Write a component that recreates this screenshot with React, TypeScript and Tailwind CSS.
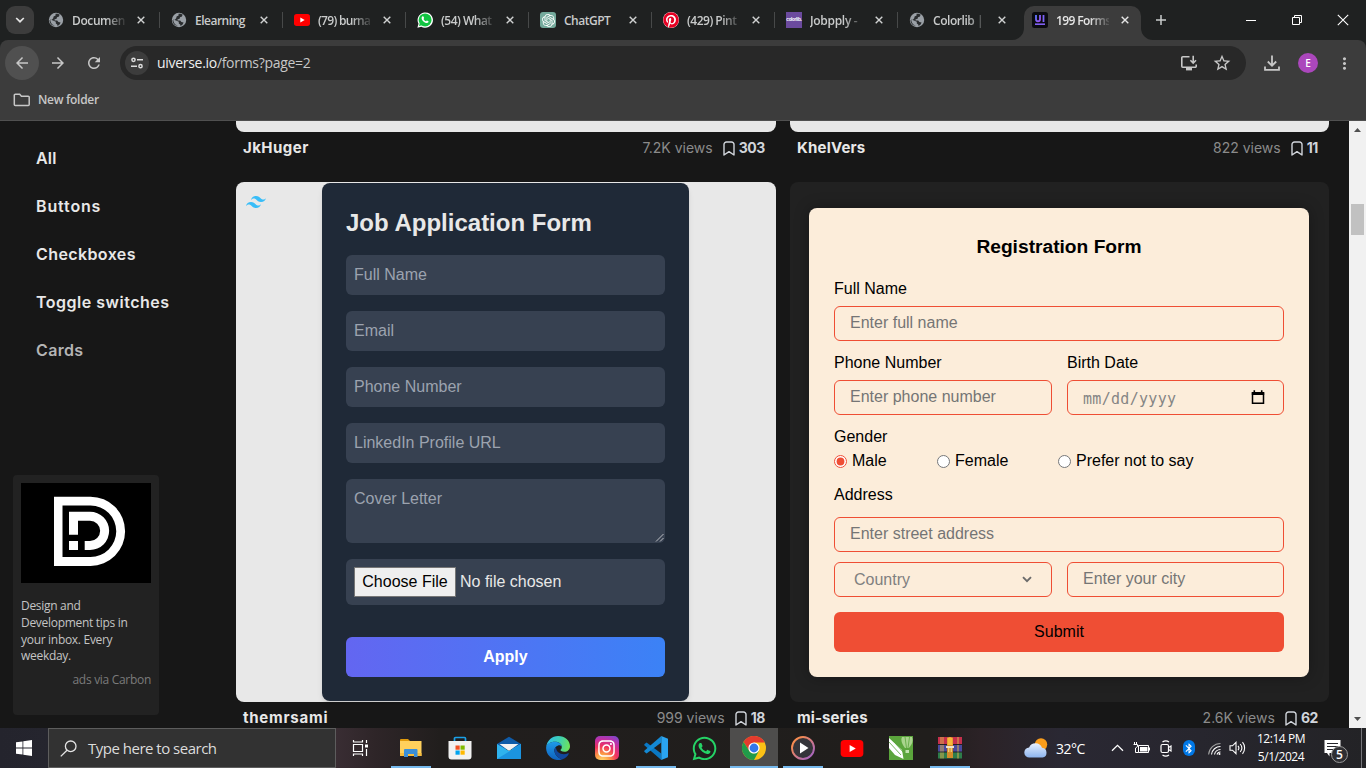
import React from "react";
import { FaPinterest, FaWhatsapp, FaInstagram } from "react-icons/fa";
import { SiOpenai, SiTailwindcss } from "react-icons/si";
import { MdArrowBack, MdArrowForward, MdRefresh, MdMoreVert, MdStarBorder, MdBluetooth } from "react-icons/md";

const segoe = "font-['Open_Sans','Noto_Sans',sans-serif]";
const arial = "font-['Liberation_Sans',Arial,sans-serif]";

/* ---------- favicons ---------- */

const Globe = () => (
  <svg width="16" height="16" viewBox="0 0 16 16">
    <circle cx="8" cy="8" r="7.2" fill="#9aa0a6" />
    <path d="M7.5 1.8C9.5 1.5 10.6 2 11.6 2.6L11 4.6 9 5.2 8.6 6.8 6.4 7.4 6.6 8.6H9.2L10.4 10 12.6 10.4 11.6 12.6 9.6 14 9.2 12.4 7.8 11.4V9.8L5 8.6 2.2 7.6C2.4 9 2.8 11 4.4 12.4L6.8 13.8C3.4 13.6 1.4 11 1.6 8 3 8.2 4.2 7.8 5.2 6.2L5.6 4.6 7.6 3.6Z" fill="#2a2d2f" />
  </svg>
);

const YouTube = ({ w = 16, h = 12 }: { w?: number; h?: number }) => (
  <svg width={w} height={h} viewBox="0 0 24 18">
    <rect width="24" height="18" rx="4" fill="#ff0000" />
    <path d="M9.500 5.200v7.600L16 9z" fill="#fff" />
  </svg>
);

const WhatsTab = () => (
  <svg width="16" height="16" viewBox="0 0 16 16">
    <path d="M.4 15.7l1.1-3.9A7.7 7.7 0 1 1 4.3 14.700z" fill="#fff" />
    <circle cx="8.1" cy="7.9" r="6.5" fill="#11c441" />
    <path d="M2 14l.8-3 2.200 2.200z" fill="#11c441" />
    <path d="M5.600 4.300c.5-.2.8 0 1 .5l.5 1.200c0 .4-.4.7-.6 1 .6 1.200 1.400 1.800 2.500 2.300.4-.2.600-.900 1-.9l1.500.8c.2.800-.5 1.700-1.500 1.800-2.800 0-5.500-2.700-5.400-5 0-.8.5-1.500 1-1.700z" fill="#fff" />
  </svg>
);

const GptTab = () => (
  <span className="flex size-4 items-center justify-center rounded-[3px] bg-[#74aa9c]">
    <SiOpenai size={13} color="#fff" />
  </span>
);

const PinTab = () => (
  <span className="flex size-4 items-center justify-center rounded-full bg-white">
    <FaPinterest size={16} color="#e60023" />
  </span>
);

const ColorlibTab = () => (
  <span className="flex size-4 items-center justify-center bg-[#6b4a9e]">
    <span className="font-['Inter',sans-serif] text-[4.500px] leading-none font-bold tracking-[-0.3px] text-white">colorlib.</span>
  </span>
);

const UiTab = () => (
  <svg width="16" height="16" viewBox="0 0 16 16">
    <defs>
      <linearGradient id="ui" x1="0" y1="0" x2="1" y2="1">
        <stop offset="0" stopColor="#5a7bff" />
        <stop offset="1" stopColor="#a24bf0" />
      </linearGradient>
    </defs>
    <rect width="16" height="16" rx="2.500" fill="#0b0b10" />
    <path d="M4 3v4.300a2 2 0 0 0 4 0V3" stroke="url(#ui)" strokeWidth="1.800" fill="none" />
    <path d="M11.500 3v7" stroke="#7a63f5" strokeWidth="1.800" />
    <path d="M3 12.200h10" stroke="#8060f3" strokeWidth="1.600" />
  </svg>
);

const CloseX = ({ color = "#d0d2d2" }: { color?: string }) => (
  <svg width="8" height="8" viewBox="0 0 8 8">
    <path d="M.7.7l6.600 6.600M7.300.7L.7 7.300" stroke={color} strokeWidth="1.400" />
  </svg>
);

const tabs: { icon: React.ReactNode; title: string; track: string }[] = [
  { icon: <Globe />, title: "Documen", track: "tracking-[-0.4px]" },
  { icon: <Globe />, title: "Elearning", track: "tracking-[-0.5px]" },
  { icon: <YouTube />, title: "(79) burna", track: "tracking-[-0.7px]" },
  { icon: <WhatsTab />, title: "(54) What", track: "tracking-[-0.5px]" },
  { icon: <GptTab />, title: "ChatGPT", track: "tracking-[-0.5px]" },
  { icon: <PinTab />, title: "(429) Pint", track: "tracking-[-0.5px]" },
  { icon: <ColorlibTab />, title: "Jobpply -", track: "tracking-[-0.3px]" },
  { icon: <Globe />, title: "Colorlib |", track: "tracking-[-0.45px]" },
];

const fade = "[mask-image:linear-gradient(to_right,#000_64%,rgba(0,0,0,0.12)_100%)]";

function TabStrip() {
  return (
    <div className={`flex h-10 bg-[#1f2121] ${segoe}`}>
      <div className="mt-1.5 ml-1.5 flex size-7 items-center justify-center rounded-[9px] bg-[#3c3c3c]">
        <svg width="10" height="6" viewBox="0 0 10 6"><path d="M1.200 1L5 4.700 8.800 1" stroke="#e3e3e3" strokeWidth="1.700" fill="none" /></svg>
      </div>
      <div className="ml-1 flex">
        {tabs.map((t, i) => (
          <div key={i} className="flex h-10 w-[123px] items-center pl-2.5">
            <span className="flex size-4 shrink-0 items-center justify-center">{t.icon}</span>
            <span className={`ml-2 w-[53px] whitespace-nowrap pt-px text-[12px] font-semibold text-[#c9cbcb] ${t.track} ${["Elearning", "ChatGPT"].includes(t.title) ? "" : fade}`}>{t.title}</span>
            <span className="ml-3"><CloseX /></span>
            <span className={`mr-px ml-auto h-4 w-[1.500px] ${i < 7 ? "bg-[#474949]" : ""}`} />
          </div>
        ))}
      </div>
      <div className="-ml-2.5 flex items-end">
        <svg width="12" height="12" viewBox="0 0 12 12"><path d="M12 0v12H0A12 12 0 0 0 12 0z" fill="#3c3c3c" /></svg>
        <div className="flex h-[34px] w-[117px] items-center rounded-t-[10px] bg-[#3c3c3c] pb-1.5 pl-2">
          <UiTab />
          <span className={`ml-2 w-[53px] whitespace-nowrap pt-px text-[12px] font-semibold tracking-[-0.6px] text-[#e6e6e6] ${fade}`}>199 Forms</span>
          <span className="ml-3"><CloseX color="#e6e6e6" /></span>
        </div>
        <svg width="12" height="12" viewBox="0 0 12 12"><path d="M0 0v12h12A12 12 0 0 1 0 0z" fill="#3c3c3c" /></svg>
      </div>
      <div className="ml-0.5 flex h-10 items-center">
        <svg width="12" height="12" viewBox="0 0 12 12"><path d="M6 1v10M1 6h10" stroke="#c9cbcb" strokeWidth="1.500" /></svg>
      </div>
      <div className="ml-auto flex h-10 items-center">
        <svg width="12" height="12" viewBox="0 0 12 12" className="mr-[34px]"><path d="M1 6.500h10" stroke="#fff" /></svg>
        <svg width="12" height="12" viewBox="0 0 12 12" className="mr-[34px]"><path d="M1.500 3.500h7v7h-7zM3.500 3.500v-2h7v7h-2" stroke="#fff" fill="none" /></svg>
        <svg width="12" height="12" viewBox="0 0 12 12" className="mr-[17px]"><path d="M.8.8l10.400 10.400M11.200.8L.8 11.200" stroke="#fff" strokeWidth="1.100" /></svg>
      </div>
    </div>
  );
}

function Toolbar() {
  return (
    <div className="bg-[#1f2121]">
      <div className={`flex h-[81px] flex-col rounded-t-lg border-b border-[#505050] bg-[#3c3c3c] ${segoe}`}>
        <div className="flex h-[46px] items-center text-[#c7c7c7]">
          <span className="ml-[5px] flex size-[34px] items-center justify-center rounded-full bg-[#505050]"><MdArrowBack size={18} /></span>
          <MdArrowForward size={18} className="ml-2.5" />
          <MdRefresh size={18} className="ml-[18px]" />
          <div className="ml-[17px] flex h-[34px] w-[1126px] items-center rounded-full bg-[#282828]">
            <span className="ml-[5px] flex size-6 items-center justify-center rounded-full bg-[#3c3c3c]">
              <svg width="14" height="12" viewBox="0 0 14 12" fill="none" stroke="#dcdcdc" strokeWidth="1.500">
                <circle cx="3.500" cy="2.800" r="1.600" /><path d="M7 2.800h6M1 9.200h6" /><circle cx="10.500" cy="9.200" r="1.600" />
              </svg>
            </span>
            <span className="ml-2 pb-px text-[14px] tracking-[-0.3px] whitespace-nowrap text-[#c7c7c7]"><span className="text-[#efefef]">uiverse.io</span>/forms?page=2</span>
            <svg width="18" height="16" viewBox="0 0 18 16" className="mr-[14px] ml-auto" fill="none" stroke="#c7c7c7" strokeWidth="1.600">
              <path d="M9.500 1.800H2.800a1 1 0 0 0-1 1v8.400a1 1 0 0 0 1 1h12.400a1 1 0 0 0 1-1V9.500" /><path d="M13.200.8v7M10.400 5.200l2.800 2.800L16 5.200" /><path d="M6 14.200h6" strokeWidth="2.400" />
            </svg>
            <MdStarBorder size={20} className="mr-3.5" />
          </div>
          <svg width="16" height="16" viewBox="0 0 16 16" className="ml-[18px]" fill="none" stroke="#c7c7c7" strokeWidth="1.800">
            <path d="M8 .5v10M3.800 6.500L8 10.700l4.200-4.200M1 11.500v3.300h14v-3.300" />
          </svg>
          <span className="ml-[18px] flex size-5 items-center justify-center rounded-full bg-[#ab47bc] text-[10px] font-semibold text-white">E</span>
          <MdMoreVert size={19} className="ml-[17px]" />
        </div>
        <div className="flex h-[28px] items-center pl-[13px]">
          <svg width="17" height="14" viewBox="0 0 17 14" fill="none" stroke="#c7c7c7" strokeWidth="1.500"><path d="M2.300 1.300h4.400l1.700 1.900h6.800a1 1 0 0 1 1 1v7.300a1 1 0 0 1-1 1H2.300a1 1 0 0 1-1-1V2.300a1 1 0 0 1 1-1z" /></svg>
          <span className="ml-2 text-[12px] font-semibold tracking-[-0.3px] text-[#c7c7c7]">New folder</span>
        </div>
      </div>
    </div>
  );
}

/* ---------- page ---------- */

const mont = "font-['Inter',sans-serif]";

function Sidebar() {
  const items: [string, string][] = [
    ["All", "text-[#e8e8e8] tracking-[0.2px]"],
    ["Buttons", "text-[#e8e8e8] tracking-[0.85px]"],
    ["Checkboxes", "text-[#e8e8e8] tracking-[0.4px]"],
    ["Toggle switches", "text-[#e8e8e8] tracking-[0.5px]"],
    ["Cards", "text-[#b4b4b4] tracking-[0.35px]"],
  ];
  return (
    <aside className="flex w-[236px] shrink-0 flex-col">
      <nav className={`flex flex-col pt-[13px] pl-9 ${mont}`}>
        {items.map(([name, style]) => (
          <a key={name} className={`flex h-12 items-center text-[16px] font-semibold ${style}`}>{name}</a>
        ))}
      </nav>
      <div className={`mt-[101px] ml-[13px] h-[240px] w-[146px] rounded bg-[#222] p-2 text-[12px] ${segoe}`}>
        <svg width="130" height="100" viewBox="0 0 130 100" className="block bg-black" fill="#fff">
          <path fillRule="evenodd" d="M33 13.700H69.500a34.600 34.600 0 0 1 0 69.200H33zM41.500 22.500V74H69.500a25.750 25.750 0 0 0 0-51.500z" />
          <path d="M48 28.700H69a19.150 19.150 0 0 1 0 38.300H63.700V58H69a10.150 10.150 0 0 0 0-20.300H57V51.700H48zM48 58h9v9h-9z" />
        </svg>
        <p className="mt-[15px] leading-[16.800px] tracking-[-0.3px] whitespace-nowrap text-[#c4c4c4]">Design and<br />Development tips in<br />your inbox. Every<br />weekday.</p>
        <p className="mt-[6px] text-right leading-[17px] tracking-[-0.3px] text-[#7b7b7b]">ads via Carbon</p>
      </div>
    </aside>
  );
}

function Meta({ name, views, saves, track }: { name: string; views: string; saves: string; track: string }) {
  return (
    <div className={`flex h-8 items-center pr-[11px] pl-[7px] ${mont}`}>
      <span className={`text-[15px] font-bold text-[#e8e8e8] ${track}`}>{name}</span>
      <span className="ml-auto pb-px text-[14px] text-[#8b8b8b]">{views}</span>
      <svg width="12" height="15" viewBox="0 0 12 15" className="ml-2.5" fill="none" stroke="#d1d5db" strokeWidth="1.400">
        <path d="M1 14V3.500A2.500 2.500 0 0 1 3.500 1h5A2.500 2.500 0 0 1 11 3.500V14L6 10.600z" strokeLinejoin="round" />
      </svg>
      <span className="ml-1 pb-px text-[14px] font-bold tracking-[-0.4px] text-[#d1d5db]">{saves}</span>
    </div>
  );
}

function JobForm() {
  return (
    <div className="relative flex h-[520px] rounded-lg bg-[#e8e8e8] py-px pl-[86px]">
      <SiTailwindcss size={20} color="#38bdf8" className="absolute top-2.5 left-2.5" />
      <div className={`w-[367px] rounded-lg bg-[#1f2937] p-6 text-[16px] shadow-md ${arial}`}>
        <h2 className="mb-4 text-2xl leading-8 font-bold text-[#e8e8e8]">Job Application Form</h2>
        {["Full Name", "Email", "Phone Number", "LinkedIn Profile URL"].map((p) => (
          <div key={p} className="mb-4 flex h-10 items-center rounded-md bg-[#374151] px-2 text-[#9ca3af]">{p}</div>
        ))}
        <div className="relative mb-4 h-16 rounded-md bg-[#374151] px-2 pt-2 text-[#9ca3af]">
          Cover Letter
          <svg width="9" height="9" viewBox="0 0 9 9" className="absolute right-px bottom-px"><path d="M1 8.500L8.500 1M5 8.500L8.500 5" stroke="#c9cbd0" strokeWidth=".9" /></svg>
        </div>
        <div className="mb-8 flex h-[46px] items-center rounded-md bg-[#374151] px-2 text-[#e8e8e8]">
          <span className="flex h-[30px] w-[102px] items-center justify-center border border-[#767676] bg-[#efefef] text-black">Choose File</span>
          <span className="ml-1">No file chosen</span>
        </div>
        <div className="flex h-10 items-center justify-center rounded-md bg-[linear-gradient(to_right,#6366f1,#3b82f6)] font-bold text-white">Apply</div>
      </div>
    </div>
  );
}

const box = "flex h-[35px] items-center rounded-md border border-[#ef4e34] px-[15px] pb-0.5 text-[#757575]";

function RegistrationForm() {
  return (
    <div className="flex h-[520px] rounded-lg bg-[#212121] pt-[26px] pl-[19px]">
      <div className={`h-[469px] w-[500px] rounded-lg bg-[#fcedda] p-[25px] text-[16px] leading-[18px] text-black shadow-[0_0_15px_rgba(0,0,0,0.3)] ${arial}`}>
        <h2 className="text-center text-[19.200px] leading-[28px] font-bold">Registration Form</h2>
        <p className="mt-[19px]">Full Name</p>
        <div className={`mt-2 ${box}`}>Enter full name</div>
        <div className="mt-[13px] grid grid-cols-[218px_217px] gap-x-[15px]">
          <p>Phone Number</p>
          <p>Birth Date</p>
          <div className={`mt-2 ${box}`}>Enter phone number</div>
          <div className="mt-2 flex h-[35px] items-center rounded-md border border-[#ef4e34] pr-[18px] pl-[15px] text-[#858585]">
            <span className="pt-0.5 font-['DejaVu_Sans_Mono',monospace] text-[15px] tracking-[0.3px]">mm/dd/yyyy</span>
            <svg width="14" height="15" viewBox="0 0 14 15" className="ml-auto"><path d="M1.500 3h11v10.300h-11z" fill="none" stroke="#000" strokeWidth="1.500" /><path d="M.8 2h12.400v3H.8zM2.500.3h1.600V3H2.500zM9.900.3h1.600V3H9.900z" /></svg>
          </div>
        </div>
        <p className="mt-[13px]">Gender</p>
        <div className="mt-1.5 flex h-[18px] items-center">
          <input type="radio" name="gender" defaultChecked className="m-0 size-[13px] accent-[#ef4e34]" /><span className="ml-[5px] w-[85px]">Male</span>
          <input type="radio" name="gender" className="m-0 size-[13px] accent-[#ef4e34]" /><span className="ml-[5px] w-[103px]">Female</span>
          <input type="radio" name="gender" className="m-0 size-[13px] accent-[#ef4e34]" /><span className="ml-[5px]">Prefer not to say</span>
        </div>
        <p className="mt-4">Address</p>
        <div className={`mt-[13px] ${box}`}>Enter street address</div>
        <div className="mt-2.5 grid grid-cols-[218px_217px] gap-x-[15px]">
          <div className="flex h-[35px] items-center rounded-md border border-[#ef4e34] pr-[19px] pl-[19px] text-[#808080]">
            Country
            <svg width="10" height="7" viewBox="0 0 10 7" className="ml-auto"><path d="M1 1.200l4 4 4-4" fill="none" stroke="#6b6b6b" strokeWidth="1.900" /></svg>
          </div>
          <div className={box}>Enter your city</div>
        </div>
        <div className="mt-[15px] flex h-10 items-center justify-center rounded-md bg-[#ef4e34]">Submit</div>
      </div>
    </div>
  );
}

function Page() {
  return (
    <div className="flex h-[607px] overflow-hidden bg-[#171717]">
      <Sidebar />
      <main className="grid w-[1093px] shrink-0 grid-cols-[540px_539px] content-start gap-x-3.5">
        <div className="h-[11px] rounded-b-lg bg-[#e8e8e8]" />
        <div className="h-[11px] rounded-b-lg bg-[#e8e8e8]" />
        <div className="mb-[18px]"><Meta name="JkHuger" views="7.2K views" saves="303" track="tracking-[0.45px]" /></div>
        <div className="mb-[18px]"><Meta name="KhelVers" views="822 views" saves="11" track="tracking-[0.2px]" /></div>
        <JobForm />
        <RegistrationForm />
        <Meta name="themrsami" views="999 views" saves="18" track="tracking-[0.75px]" />
        <Meta name="mi-series" views="2.6K views" saves="62" track="tracking-[0.1px]" />
      </main>
      <div className="ml-auto flex w-[17px] flex-col items-center bg-[#f1f1f1]">
        <svg width="7" height="4" viewBox="0 0 7 4" className="mt-[7px]"><path d="M0 4l3.500-4L7 4z" fill="#505050" /></svg>
        <div className="mt-[72px] h-[31px] w-[13px] bg-[#c1c1c1]" />
        <svg width="7" height="4" viewBox="0 0 7 4" className="mt-auto mb-[7px]"><path d="M0 0l3.500 4L7 0z" fill="#505050" /></svg>
      </div>
    </div>
  );
}

/* ---------- taskbar ---------- */

const Explorer = () => (
  <svg width="24" height="24" viewBox="0 0 24 24">
    <path d="M1 4a1 1 0 0 1 1-1h7l2 2v4H1z" fill="#e09a0c" /><path d="M1 5h21.500v15H1z" fill="#ffd05c" /><path d="M1 17h21.500v3H1z" fill="#f6bd3c" />
    <path d="M5 21v-7a1 1 0 0 1 1-1h11.500a1 1 0 0 1 1 1v7h-3.500v-3h-6v3z" fill="#3a8fd8" />
  </svg>
);
const Store = () => (
  <svg width="24" height="24" viewBox="0 0 24 24">
    <path d="M6.500 6V2.500A1 1 0 0 1 7.500 1.500h9a1 1 0 0 1 1 1V6" fill="none" stroke="#1ba1e8" strokeWidth="1.700" />
    <path d="M.5 5h23v15.500a3 3 0 0 1-3 3h-17a3 3 0 0 1-3-3z" fill="#f1f1f1" />
    <path d="M7.500 9.500h4.200v4.200H7.500z" fill="#f25022" /><path d="M12.500 9.500h4.200v4.200h-4.200z" fill="#7fba00" /><path d="M7.500 14.500h4.200v4.200H7.500z" fill="#00a4ef" /><path d="M12.500 14.500h4.200v4.200h-4.200z" fill="#ffb900" />
  </svg>
);
const Mail = () => (
  <svg width="24" height="24" viewBox="0 0 24 24">
    <path d="M0 8L12 .8 24 8v5H0z" fill="#0f5ba8" /><path d="M2.500 8h19L12 15z" fill="#f2f2f2" /><path d="M0 8l12 7 12-7v15H0z" fill="#2fb3ee" /><path d="M0 23L24 8v15z" fill="#1b94e0" />
  </svg>
);
const Edge = () => (
  <svg width="24" height="24" viewBox="0 0 24 24">
    <defs>
      <linearGradient id="eg" x1="0" y1=".3" x2="1" y2=".5"><stop offset="0" stopColor="#2fc0ee" /><stop offset=".55" stopColor="#3fd0b0" /><stop offset="1" stopColor="#6ee25a" /></linearGradient>
      <linearGradient id="eb" x1="0" y1="0" x2="0" y2="1"><stop offset="0" stopColor="#1e9be8" /><stop offset="1" stopColor="#0f60bd" /></linearGradient>
    </defs>
    <path d="M.2 11C1 4.500 6 0 12.200 0 19 0 24 4.800 24 10.200c0 3.400-2.600 5.600-5.500 5.600-3 0-4.200-1-4-1.700.3-.8 1.300-1.400 1.300-3.200C15.800 8 12.800 5.800 9 5.800 4 5.800 1 8.500.2 11z" fill="url(#eg)" />
    <path d="M.1 12C.2 8 4 5.800 9 5.800c3.800 0 6.600 2.200 6.800 4.800-1-1-2.400-1.500-3.600-1.200C9.500 10 8 12.500 8.500 15.500c.6 3.700 3.700 6.400 7.500 8C8 26 .2 20 .1 12z" fill="url(#eb)" />
    <path d="M10 11c-1 1.200-1.700 2.700-1.500 4.500.6 3.700 3.700 6.400 7.500 8 3.400-1.100 5.500-3.300 6.700-5.600.3-.5-.2-.8-.6-.6-5.800 2.700-12.300-.7-12.100-6.300z" fill="#11489c" />
  </svg>
);
const Insta = () => (
  <span className="flex size-6 items-center justify-center rounded-[5px] bg-[radial-gradient(circle_at_30%_105%,#ffdd70_0%,#fb9a45_25%,#f0315f_50%,#c32fa3_72%,#6a4fd8_100%)]">
    <FaInstagram size={19} color="#fff" />
  </span>
);
const Code = () => (
  <svg width="24" height="24" viewBox="0 0 24 24">
    <path d="M2.600 6.500L.3 8.200v1L17.300 24v-6.500z" fill="#0a78c4" /><path d="M17.300 0v6.500L2.600 17.500.3 15.800v-1z" fill="#1489d4" /><path d="M17.300 0L24 2.800v18.400L17.300 24z" fill="#2aa4f0" />
  </svg>
);
const Chrome = () => (
  <svg width="24" height="24" viewBox="0 0 24 24">
    <circle cx="12" cy="12" r="12" fill="#fbc116" />
    <path d="M12 6.500H22.700A12 12 0 0 0 1.600 6L7.200 14.700z" fill="#e33b2e" />
    <path d="M1.600 6A12 12 0 0 0 12 24l5-9.200-5 2.700c-2.200 0-4-1.200-4.800-2.800z" fill="#219a4a" />
    <circle cx="12" cy="12" r="5.600" fill="#fff" /><circle cx="12" cy="12" r="4.400" fill="#3277ea" />
  </svg>
);
const Player = () => (
  <svg width="24" height="24" viewBox="0 0 24 24">
    <defs><linearGradient id="pl" x1="0" y1="0" x2="1" y2="1"><stop offset=".2" stopColor="#f58b52" /><stop offset="1" stopColor="#9b5fd0" /></linearGradient></defs>
    <circle cx="12" cy="12" r="11" fill="#35353a" stroke="url(#pl)" strokeWidth="1.900" /><path d="M9 6.500v11l8.500-5.500z" fill="#fff" />
  </svg>
);
const Corel = () => (
  <svg width="24" height="24" viewBox="0 0 24 24">
    <path d="M0 0h24v24H0z" fill="#5ba53c" />
    <path d="M0 2l13 12 1.500 9L6 19 0 12z" fill="#fff" /><path d="M0 6l12 13M3 3.500L14 16" stroke="#5ba53c" strokeWidth=".8" />
    <path d="M13 1c-2 4 1 8 3 11h4c2-3 5-6 3-11z" fill="#a9d48d" /><path d="M16 1l1.500 11M20.500 1L19 12" stroke="#5ba53c" strokeWidth=".8" /><path d="M16.500 14h3.500v3h-3.500z" fill="#c3e2b0" />
  </svg>
);
const Rar = () => (
  <svg width="24" height="24" viewBox="0 0 24 24">
    <path d="M0 1h24v7H0z" fill="#c5304c" /><path d="M0 9h24v6.500H0z" fill="#4a4a9e" /><path d="M0 16.500h24v6H0z" fill="#2e7d4a" />
    <path d="M3 1v7M5 1v7M3 9v6.500M5 9v6.500M3 16.500v6M5 16.500v6M20 1v7M20 9v6.500M20 16.500v6" stroke="#d8b04c" />
    <path d="M9 1.500h6V22H9z" fill="#d38b2a" /><path d="M9.500 2l2.500-1 2.500 1v7h-5z" fill="#f6b93a" /><path d="M8 10h8v2h-2v4h-4v-4H8z" fill="#efe3c8" /><path d="M10.500 12h3v4h-3z" fill="#e0a83c" />
  </svg>
);

const apps: { icon: React.ReactNode; line?: boolean; active?: boolean }[] = [
  { icon: <Explorer />, line: true },
  { icon: <Store /> },
  { icon: <Mail /> },
  { icon: <Edge /> },
  { icon: <Insta /> },
  { icon: <Code />, line: true },
  { icon: <FaWhatsapp size={27} color="#25d366" /> },
  { icon: <Chrome />, active: true },
  { icon: <Player />, line: true },
  { icon: <YouTube w={24} h={17} /> },
  { icon: <Corel /> },
  { icon: <Rar />, line: true },
];

function Taskbar() {
  return (
    <div className={`flex h-10 overflow-hidden bg-[linear-gradient(to_right,#24242d_0px,#25252e_48px,#392d33_336px,#2e2528_375px,#211e1d_440px,#201e1c_930px,#2b2226_980px,#2a2833_1060px,#27262e_1200px,#232326_1366px)] text-white ${segoe}`}>
      <div className="flex w-12 items-center justify-center">
        <svg width="16" height="16" viewBox="0 0 16 16" fill="#fff"><path d="M0 2.300L6.500 1.400v6.200H0zM7.300 1.300L16 0v7.600H7.300zM0 8.400h6.500v6.200L0 13.700zM7.300 8.400H16V16l-8.700-1.200z" /></svg>
      </div>
      <div className="flex w-[288px] items-center border border-[#5d5d5d] bg-[#323232] pl-[11px]">
        <svg width="17" height="17" viewBox="0 0 17 17" fill="none" stroke="#e4e4e4" strokeWidth="1.300"><circle cx="10.700" cy="6.300" r="5.300" /><path d="M7 10.200L.8 16.400" /></svg>
        <span className="ml-[11px] text-[15px] tracking-[-0.5px] whitespace-nowrap text-[#dcdcdc]">Type here to search</span>
      </div>
      <div className="flex w-[50px] items-center justify-center pr-0.5">
        <svg width="17" height="16" viewBox="0 0 17 16" fill="none" stroke="#fff" strokeWidth="1.200"><path d="M1.500 4.500h9v7h-9zM1.500 0v2h9V0M1.500 16v-2h9v2M14.500 0v3M14.500 9v7" /><path d="M13 4.500h3v3h-3z" fill="#fff" stroke="none" /></svg>
      </div>
      {apps.map((a, i) => (
        <div key={i} className="flex w-[49px] shrink-0 flex-col items-center">
          <div className={`flex h-[38px] w-12 items-center justify-center pt-0.5 ${a.active ? "bg-[#4e4d4c]" : ""}`}>{a.icon}</div>
          <div className={`h-0.5 ${a.active ? "w-12 bg-[#76b9ed]" : a.line ? "w-10 bg-[#76b9ed]" : ""}`} />
        </div>
      ))}
      <div className="ml-[50px] flex items-center">
        <svg width="24" height="20" viewBox="0 0 24 20">
          <defs><linearGradient id="cl" x1="0" y1="0" x2="0" y2="1"><stop offset="0" stopColor="#e6f0ff" /><stop offset="1" stopColor="#8db4ee" /></linearGradient></defs>
          <circle cx="17" cy="6.500" r="6.200" fill="#f99d1c" /><path d="M5.500 19.500a5 5 0 0 1-.4-10A7 7 0 0 1 18 9.800a4.900 4.900 0 0 1 .5 9.700z" fill="url(#cl)" />
        </svg>
        <span className="ml-2 w-[46px] text-[14px] tracking-[-0.5px]">32°C</span>
        <svg width="13" height="8" viewBox="0 0 13 8" className="ml-[9px]" fill="none" stroke="#fff" strokeWidth="1.300"><path d="M1 6.800l5.500-5.500L12 6.800" /></svg>
        <svg width="17" height="13" viewBox="0 0 17 13" className="ml-[9px]" fill="none" stroke="#fff"><path d="M5.500 3.500h10v7h-10zM16.500 5.500v3M1.500 0v2M3.500 0v2M.5 2.500h4v2l-2 1.500v4.500h3" /><path d="M7 5h7.500v4.500H7z" fill="#fff" stroke="none" /></svg>
        <svg width="12" height="17" viewBox="0 0 12 17" className="ml-[10px]" fill="none" stroke="#fff" strokeWidth="1.200"><rect x="1" y="4.500" width="7.500" height="8" rx="1.500" /><path d="M8.500 7.500l2.500-1.500v5l-2.500-1.500M2.500 2C4.500.5 7 .5 9 2M2.500 15c2 1.500 4.500 1.500 6.500 0" /></svg>
        <span className="ml-[11px] flex h-4 w-3 items-center justify-center rounded-[6px] bg-[#0078e7]"><MdBluetooth size={13} /></span>
        <svg width="13" height="13" viewBox="0 0 13 13" className="ml-[13px]" fill="none" stroke="#fff" strokeWidth="1.100"><path d="M.6 12.500A12 12 0 0 1 12.500 1.500" stroke="#a0a0a0" /><path d="M3.500 12.500a9 9 0 0 1 9-8M6.500 12.500a6 6 0 0 1 6-5M9 12.500a3.500 3.500 0 0 1 3.500-2.500" /><circle cx="11.500" cy="12" r="1" fill="#fff" stroke="none" /></svg>
        <svg width="17" height="14" viewBox="0 0 17 14" className="ml-2" fill="none" stroke="#fff" strokeWidth="1.100"><path d="M1 4.800h2.500L7 1.300v11.400L3.500 9.200H1zM9 4.800a3.500 3.500 0 0 1 0 4.400M11.200 3a6.200 6.200 0 0 1 0 8M13.500 1.200a9 9 0 0 1 0 11.600" /></svg>
        <div className="ml-[9px] flex w-[52px] flex-col items-center text-[12px] leading-[18px] tracking-[-0.45px] whitespace-nowrap"><span>12:14 PM</span><span>5/1/2024</span></div>
        <div className="relative ml-[17px] h-6 w-6">
          <svg width="17" height="17" viewBox="0 0 17 17" className="mt-1"><path d="M.5 0h16v13H5.500v3.500L3 13H.5z" fill="#fff" /><path d="M3 3.500h11M3 6.500h11M3 9.500h7" stroke="#26262c" /></svg>
          <span className="absolute top-[10px] left-[7px] flex size-[17px] items-center justify-center rounded-full border border-[#9a9a9a] bg-[#2f2f33] text-[12px] leading-none font-semibold">5</span>
        </div>
      </div>
      <div className="mr-1 ml-auto w-px bg-[#75757a]" />
    </div>
  );
}

export default function App() {
  return (
    <div className="flex h-[768px] w-[1366px] flex-col overflow-hidden">
      <TabStrip />
      <Toolbar />
      <Page />
      <Taskbar />
    </div>
  );
}
